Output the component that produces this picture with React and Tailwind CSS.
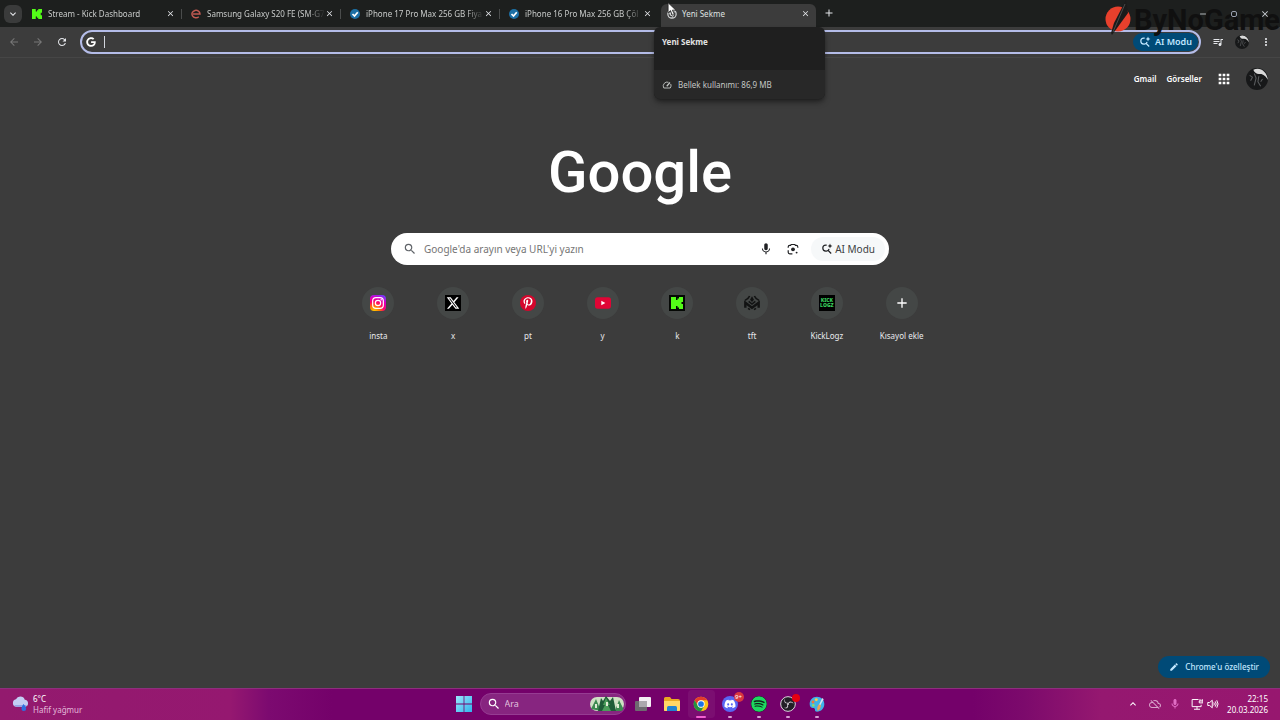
import {
  MdSearch,
  MdMic,
  MdRefresh,
  MdArrowBack,
  MdArrowForward,
  MdQueueMusic,
  MdEdit,
  MdClose,
  MdAdd,
  MdRemove,
  MdMoreVert,
  MdApps,
  MdKeyboardArrowDown,
  MdKeyboardArrowUp,
  MdOutlineMic,
  MdCloudOff,
} from 'react-icons/md'
import { FaDiscord, FaPinterestP, FaGoogle, FaSpotify } from 'react-icons/fa'
import { FaXTwitter } from 'react-icons/fa6'

function KickIcon({ className, framed }) {
  return (
    <svg viewBox="0 0 16 16" className={className} aria-hidden="true">
      {framed && <rect width="16" height="16" fill="#050805" />}
      <path
        fill="#53fc18"
        d={
          framed
            ? 'M2 2h5v3h1.500V3.500H10V2h4v5h-1.500v2H14v5h-4v-1.500H8.500V11H7v3H2z'
            : 'M0 0h6v4h2V2h2V0h6v6h-2v4h2v6h-6v-2H8v-2H6v4H0z'
        }
      />
    </svg>
  )
}

function AiSearchIcon({ className }) {
  return (
    <svg viewBox="0 0 20 20" className={className} fill="none" aria-hidden="true">
      <path
        d="M9.500 3.500H8a5 5 0 0 0 0 10h1a5 5 0 0 0 4.500-3.500M12 12.500l5 5"
        stroke="currentColor"
        strokeWidth="2"
      />
      <path
        d="M15 1l1.200 2.800L19 5l-2.800 1.200L15 9l-1.200-2.800L11 5l2.800-1.200z"
        fill="currentColor"
      />
    </svg>
  )
}

function LensIcon({ className }) {
  return (
    <svg viewBox="0 0 20 20" className={className} fill="none" aria-hidden="true">
      <path
        d="M2 8V6.500A2.500 2.500 0 0 1 4.500 4H6l1-1.500h6L14 4h1.500A2.500 2.500 0 0 1 18 6.500V8M2 12v3.500A2.500 2.500 0 0 0 4.500 18H9"
        stroke="currentColor"
        strokeWidth="2"
      />
      <circle cx="10" cy="10.500" r="3.200" fill="currentColor" />
      <circle cx="16" cy="16" r="1.600" fill="currentColor" />
    </svg>
  )
}

function ChromeIcon({ className }) {
  return (
    <svg viewBox="0 0 24 24" className={className} aria-hidden="true">
      <circle cx="12" cy="12" r="11" fill="#fbc116" />
      <path d="M2.470 6.500A11 11 0 0 1 21.530 6.500H12a5.500 5.500 0 0 0-4.760 8.250z" fill="#e33b2e" />
      <path d="M2.470 6.500A11 11 0 0 0 12 23l4.760-8.250A5.500 5.500 0 0 1 7.240 14.750z" fill="#229342" />
      <circle cx="12" cy="12" r="5.500" fill="#fff" />
      <circle cx="12" cy="12" r="4.300" fill="#1a73e8" />
    </svg>
  )
}

function GrayChromeIcon({ className }) {
  return (
    <svg viewBox="0 0 24 24" className={className} fill="none" aria-hidden="true">
      <circle cx="12" cy="12" r="10" stroke="#d0d2d3" strokeWidth="3" />
      <circle cx="12" cy="12" r="4" stroke="#d0d2d3" strokeWidth="3" />
      <path d="M12 7h9M8 14L3.500 6.500M16 14l-4.500 8" stroke="#d0d2d3" strokeWidth="2" />
    </svg>
  )
}

function EpeyIcon({ className }) {
  return (
    <svg viewBox="0 0 20 20" className={className} fill="none" aria-hidden="true">
      <path
        d="M4 10h14a8 7.500 0 1 0-2.500 5.500"
        stroke="#c25a52"
        strokeWidth="3"
      />
    </svg>
  )
}

function CheckBadge({ className }) {
  return (
    <svg viewBox="0 0 20 20" className={className} fill="none" aria-hidden="true">
      <circle cx="10" cy="10" r="10" fill="#1c6fa5" />
      <path d="M5 10l4 4 6.500-7.500" stroke="#fff" strokeWidth="3.500" />
    </svg>
  )
}

function Avatar({ className }) {
  return (
    <svg viewBox="0 0 24 24" className={className} aria-hidden="true">
      <circle cx="12" cy="12" r="12" fill="#171819" />
      <path d="M8 2c7-4 15 2 16 11-2-4-6-7-9-6.500C12 7 9 5 8 2z" fill="#d9d9d9" />
      <path d="M4 8l3 2-2 4M9 6l2 5-2 8M14 9l-1 6 3 5M18 12l-2 3" stroke="#5a5c5e" strokeWidth="1.200" fill="none" />
    </svg>
  )
}

function InstagramIcon({ className }) {
  return (
    <svg viewBox="0 0 24 24" className={className} aria-hidden="true">
      <defs>
        <radialGradient id="insta" cx="0.25" cy="1.050" r="1.150">
          <stop offset="0" stopColor="#ffd600" />
          <stop offset="0.3" stopColor="#ff7a00" />
          <stop offset="0.55" stopColor="#ff0169" />
          <stop offset="0.8" stopColor="#d300c5" />
          <stop offset="1" stopColor="#7638fa" />
        </radialGradient>
      </defs>
      <rect width="24" height="24" rx="6" fill="url(#insta)" />
      <rect x="4" y="4" width="16" height="16" rx="5" fill="none" stroke="#fff" strokeWidth="1.800" />
      <circle cx="12" cy="12" r="4" fill="none" stroke="#fff" strokeWidth="1.800" />
      <circle cx="16.800" cy="7.200" r="1.100" fill="#fff" />
    </svg>
  )
}

function YoutubeIcon({ className }) {
  return (
    <svg viewBox="0 0 24 24" className={className} aria-hidden="true">
      <rect y="3.500" width="24" height="17" rx="4" fill="#e00535" />
      <path d="M9.500 8.500v7l6-3.500z" fill="#fff" />
    </svg>
  )
}

function TftIcon({ className }) {
  return (
    <svg viewBox="0 0 24 24" className={className} fill="none" aria-hidden="true">
      <g stroke="#121313" strokeWidth="2.400">
        <path d="M8.500 1.500Q7 5 1.500 8M15.500 1.500Q17 5 22.500 8" />
        <path d="M2 19v-7.500l10 7.500 10-7.500V19" strokeWidth="3.600" />
        <path d="M7 9.500l5 4 5-4M6 20l3 2M18 20l-3 2" />
      </g>
      <path d="M12 2l3 5-3 3.500L9 7z" fill="#121313" />
    </svg>
  )
}

function WindowsIcon({ className }) {
  return (
    <svg viewBox="0 0 16 16" className={className} aria-hidden="true">
      <defs>
        <linearGradient id="win" x1="0" y1="0" x2="1" y2="1">
          <stop offset="0" stopColor="#9be7fb" />
          <stop offset="1" stopColor="#31b3ec" />
        </linearGradient>
      </defs>
      <path d="M0 0h7.600v7.600H0zM8.400 0H16v7.600H8.400zM0 8.400h7.600V16H0zM8.400 8.400H16V16H8.400z" fill="url(#win)" />
    </svg>
  )
}

function TaskViewIcon({ className }) {
  return (
    <svg viewBox="0 0 16 16" className={className} aria-hidden="true">
      <rect x="4" y="1" width="12" height="10" rx="1" fill="#f3eef3" />
      <rect x="0" y="5" width="12" height="10" rx="1" fill="#6e6a70" />
      <rect x="4" y="5" width="8" height="6" fill="#aba8ad" />
    </svg>
  )
}

function FolderIcon({ className }) {
  return (
    <svg viewBox="0 0 16 16" className={className} aria-hidden="true">
      <path d="M0 2.500Q0 1 1.500 1H6l1.500 2H14q2 0 2 2v9q0 1-1 1H1q-1 0-1-1z" fill="#e9a922" />
      <path d="M0 5h16v9q0 1-1 1H1q-1 0-1-1z" fill="#ffd766" />
      <path d="M3 15v-3.500Q3 10 4.500 10h7q1.500 0 1.500 1.500V15z" fill="#1f83d2" />
    </svg>
  )
}

function ObsIcon({ className }) {
  return (
    <svg viewBox="0 0 24 24" className={className} aria-hidden="true">
      <circle cx="12" cy="12" r="11" fill="#221f26" stroke="#ddd6de" strokeWidth="1.500" />
      <g fill="#d5cfd7">
        <path d="M8 3.500c-2 5 1 7.500 4.500 6.500C9 13 4 9 8 3.500z" />
        <path d="M20.500 12c-3.500-4-7.500-2.500-8 1 -1-5 5-7 8-1z" />
        <path d="M6 17.500c5 .5 6-3 4-6 4.500 2.500 2 9-4 6z" />
        <circle cx="12" cy="12" r="1.500" />
      </g>
    </svg>
  )
}

function PaintIcon({ className }) {
  return (
    <svg viewBox="0 0 24 24" className={className} aria-hidden="true">
      <path
        d="M12 1C5 1 1 6 1 12c0 4 2 6 5 6 2 0 3 1 3 3 0 1.500 1 2.500 3 2.500 6 0 11-5 11-11.500S18 1 12 1z"
        fill="#3fb2e8"
      />
      <circle cx="6" cy="9" r="2.200" fill="#f5733a" />
      <circle cx="11" cy="5.500" r="2.200" fill="#f7d04a" />
      <circle cx="6.500" cy="14" r="2" fill="#8fdc6b" />
      <path d="M20 3l-5 10 2 1 5-9z" fill="#d7e4ef" />
      <path d="M15 12.500l3 1.500c-.5 4-2 7-5 8.500-1.500-3-.5-7 2-10z" fill="#e8a25c" />
    </svg>
  )
}

function WeatherIcon({ className }) {
  return (
    <svg viewBox="0 0 18 16" className={className} aria-hidden="true">
      <path d="M4.500 11a4 4 0 0 1-.3-7.900A5 5 0 0 1 13.500 3.500a3.800 3.800 0 0 1 .5 7.500z" fill="#c3cdf3" />
      <path d="M2 9h14l-2 2H4.500z" fill="#93a5e6" />
      <path d="M12 8c2 2 3 3.500 3 5a2.500 2.500 0 0 1-5 0c0-1.500 1-3 2-5z" fill="#2f6fe0" />
    </svg>
  )
}

function ForestIcon({ className }) {
  return (
    <svg viewBox="0 0 34 18" className={className} aria-hidden="true">
      <rect y="2" width="34" height="14" rx="7" fill="#cfe0c4" />
      <path d="M1 14L6 4l5 12zM25 16l4-11 4.500 9-2 2z" fill="#3d8a52" />
      <path d="M8 16l3-13 2 3 3-5 4 5 3-4 3 14z" fill="#1f5c38" />
      <path d="M16 3l4 7h-2l3 6h-9l3-6h-2z" fill="#4b9d5b" />
      <path d="M6 9v4M17 7v4M28 9v4" stroke="#f2f5e4" strokeWidth="1.800" />
    </svg>
  )
}

function MonitorIcon({ className }) {
  return (
    <svg viewBox="0 0 16 16" className={className} fill="none" stroke="currentColor" strokeWidth="1.300" aria-hidden="true">
      <path d="M10 2H1.500v9.500h12V9M4 15h8M8 11.500V15M12 1.500v2.500M15 1.500v2.500M11 4h5v2.500h-5z" />
    </svg>
  )
}

function SpeakerIcon({ className }) {
  return (
    <svg viewBox="0 0 16 16" className={className} fill="none" stroke="currentColor" strokeWidth="1.300" aria-hidden="true">
      <path d="M1 6v4h2.500L7 13V3L3.500 6zM9 6q1.500 2 0 4M11 4.500q2.500 3.500 0 7M13 3q3.500 5 0 10" />
    </svg>
  )
}

const tabs = [
  { title: 'Stream - Kick Dashboard', Icon: KickIcon },
  { title: 'Samsung Galaxy S20 FE (SM-G7', Icon: EpeyIcon },
  { title: 'iPhone 17 Pro Max 256 GB Fiya', Icon: CheckBadge },
  { title: 'iPhone 16 Pro Max 256 GB Çöl', Icon: CheckBadge, last: true },
]

const shortcuts = [
  { label: 'insta', icon: <InstagramIcon className="h-4 w-4" /> },
  {
    label: 'x',
    icon: (
      <span className="flex h-4 w-4 items-center justify-center bg-black text-white">
        <FaXTwitter className="h-3.5 w-3.5" />
      </span>
    ),
  },
  {
    label: 'pt',
    icon: (
      <span className="flex h-4 w-4 items-center justify-center rounded-full bg-[#d5062c] text-white">
        <FaPinterestP className="h-3 w-3" />
      </span>
    ),
  },
  { label: 'y', icon: <YoutubeIcon className="h-4 w-4" /> },
  { label: 'k', icon: <KickIcon framed className="h-4 w-4" /> },
  { label: 'tft', icon: <TftIcon className="h-4 w-4" /> },
  {
    label: 'KickLogz',
    icon: (
      <span className="flex h-4 w-4 flex-col items-center justify-center bg-black text-[5px] leading-[5px] font-black text-[#37c95a]">
        <span>KICK</span>
        <span>LOGZ</span>
      </span>
    ),
  },
  { label: 'Kısayol ekle', icon: <MdAdd className="h-4 w-4 text-white" /> },
]

const apps = [
  { name: 'Görev görünümü', icon: <TaskViewIcon className="h-4 w-4" /> },
  { name: 'Dosya Gezgini', icon: <FolderIcon className="h-4 w-4" /> },
  { name: 'Chrome', icon: <ChromeIcon className="h-4 w-4" />, active: true },
  {
    name: 'Discord',
    icon: (
      <span className="flex h-4 w-4 items-center justify-center rounded-full bg-[#5865f2] text-white">
        <FaDiscord className="h-3 w-3" />
      </span>
    ),
    badge: '9+',
    running: true,
  },
  {
    name: 'Spotify',
    icon: <FaSpotify className="h-4 w-4 rounded-full bg-[#10251a] text-[#1ed760]" />,
    running: true,
  },
  { name: 'OBS Studio', icon: <ObsIcon className="h-4 w-4" />, recording: true, running: true },
  { name: 'Paint', icon: <PaintIcon className="h-4 w-4" />, running: true },
]

function TabStrip() {
  return (
    <div className="flex h-[27px] items-end bg-[#1d1f1e] pl-1">
      <button
        aria-label="Sekmelerde ara"
        className="mb-1 flex h-[18px] w-[18px] items-center justify-center rounded-md bg-[#3a3b3b] text-gray-200"
      >
        <MdKeyboardArrowDown className="h-3 w-3" />
      </button>

      <div className="ml-px flex">
        {tabs.map(({ title, Icon, last }) => (
          <div key={title} className="relative flex h-[27px] w-[159px] items-center pr-[7px] pl-[9px]">
            <Icon className="h-2.5 w-2.5 shrink-0" />
            <span className="ml-1.5 flex-1 mask-r-from-85% text-[8px] whitespace-nowrap text-[#c9cbca]">
              {title}
            </span>
            <button aria-label="Kapat" className="text-gray-200">
              <MdClose className="h-[9px] w-[9px]" />
            </button>
            {!last && <span className="absolute right-0 h-2.5 w-px bg-[#4a4c4c]" />}
          </div>
        ))}

        <div className="relative flex h-[27px] w-[159px] items-end px-0.5">
          <div className="flex h-[23px] flex-1 items-center rounded-t-md bg-[#3c3c3c] pr-1.5 pb-1 pl-1.5">
            <GrayChromeIcon className="h-2.5 w-2.5 shrink-0" />
            <span className="ml-[5px] flex-1 text-[8px] text-[#dfe1e0]">Yeni Sekme</span>
            <button aria-label="Kapat" className="text-gray-200">
              <MdClose className="h-[9px] w-[9px]" />
            </button>
          </div>

          <div className="absolute top-[27px] -left-[5px] z-10 w-[171px] overflow-hidden rounded-md bg-[#1f1f1f] shadow-md shadow-black/40">
            <p className="h-[43px] px-2 pt-[9px] text-[8px] leading-3 font-bold text-[#e3e3e3]">
              Yeni Sekme
            </p>
            <div className="flex h-[29px] items-center gap-1.5 bg-[#282828] px-2 text-[8px] text-[#c4c7c5]">
              <svg viewBox="0 0 20 16" className="h-2 w-2.5" fill="none" stroke="currentColor" strokeWidth="1.800" aria-hidden="true">
                <path d="M13 2.500A8 8 0 0 0 3.500 14h13A8 8 0 0 0 17.500 6" />
                <path d="M9.500 10.500L16 3" strokeWidth="2.400" />
              </svg>
              Bellek kullanımı: 86,9 MB
            </div>
          </div>
        </div>
      </div>

      <button aria-label="Yeni sekme" className="mb-2 ml-[5px] text-gray-200">
        <MdAdd className="h-3 w-3" />
      </button>

      <div className="relative z-10 ml-auto flex h-[27px] text-gray-300">
        <button aria-label="Simge durumuna küçült" className="flex w-[31px] items-center justify-center">
          <MdRemove className="h-2.5 w-2.5" />
        </button>
        <button aria-label="Önceki boyut" className="flex w-[31px] items-center justify-center">
          <span className="h-1.5 w-1.5 rounded-xs border border-gray-400" />
        </button>
        <button aria-label="Pencereyi kapat" className="flex w-[31px] items-center justify-center">
          <MdClose className="h-2.5 w-2.5" />
        </button>
      </div>
    </div>
  )
}

function Toolbar() {
  return (
    <div className="flex h-[31px] items-center border-b border-[#464646] px-2 text-gray-200">
      <button aria-label="Geri" className="flex w-3 justify-center text-[#777]">
        <MdArrowBack className="h-3 w-3" />
      </button>
      <button aria-label="İleri" className="ml-3 flex w-3 justify-center text-[#777]">
        <MdArrowForward className="h-3 w-3" />
      </button>
      <button aria-label="Yenile" className="ml-3 flex w-3 justify-center">
        <MdRefresh className="h-3 w-3" />
      </button>

      <div className="ml-3 flex h-6 flex-1 items-center rounded-full border-2 border-[#b4bce8] pr-px pl-1">
        <FaGoogle className="h-2.5 w-2.5 text-white" />
        <span className="ml-2 h-3 w-px bg-gray-300" />
        <input aria-label="Adres ve arama çubuğu" className="min-w-0 flex-1 px-1 text-[9px] outline-none" />
        <button className="flex h-[18px] items-center gap-1 rounded-full bg-[#004a77] px-1.5 text-[9px] font-semibold text-[#c2e7ff]">
          <AiSearchIcon className="h-3 w-3" />
          AI Modu
        </button>
      </div>

      <button aria-label="Medya" className="ml-[11px]">
        <MdQueueMusic className="h-3 w-3" />
      </button>
      <button aria-label="Profil" className="ml-[11px]">
        <Avatar className="h-3.5 w-3.5" />
      </button>
      <button aria-label="Menü" className="ml-[11px]">
        <MdMoreVert className="h-3 w-3" />
      </button>
    </div>
  )
}

function NewTabPage() {
  return (
    <main className="flex flex-1 flex-col items-center">
      <div className="flex h-[42px] w-full items-center justify-end pr-3 text-[8px] font-semibold text-white">
        <a href="#gmail">Gmail</a>
        <a href="#gorseller" className="ml-2.5">Görseller</a>
        <button aria-label="Google uygulamaları" className="ml-3.5">
          <MdApps className="h-4 w-4" />
        </button>
        <button aria-label="Google Hesabı" className="ml-3.5">
          <Avatar className="h-[22px] w-[22px]" />
        </button>
      </div>

      <h1 className="mt-9 text-[58px] leading-[72px] font-medium text-white [font-family:Roboto,sans-serif]">
        Google
      </h1>

      <form className="mt-[25px] flex h-8 w-[498px] items-center rounded-full bg-white pr-1 pl-3 text-[#3c4043]">
        <MdSearch className="h-3.5 w-3.5 text-[#5f6368]" />
        <input
          aria-label="Google'da ara"
          placeholder="Google'da arayın veya URL'yi yazın"
          className="ml-[7px] min-w-0 flex-1 text-[10px] outline-none placeholder:text-[#757575]"
        />
        <button type="button" aria-label="Sesli arama">
          <MdMic className="h-3.5 w-3.5 text-[#202124]" />
        </button>
        <button type="button" aria-label="Görselle arama" className="ml-3.5">
          <LensIcon className="h-3 w-3 text-[#202124]" />
        </button>
        <button
          type="button"
          className="ml-3 flex h-6 items-center gap-0.5 rounded-full bg-[#f6f8f9] px-2.5 text-[10px]"
        >
          <AiSearchIcon className="h-3 w-3 text-[#202124]" />
          AI Modu
        </button>
      </form>

      <div className="mt-[22px] grid w-[598px] grid-cols-8">
        {shortcuts.map((item) => (
          <a
            key={item.label}
            href={`#${item.label}`}
            className="flex flex-col items-center gap-[11px] text-[8px] leading-3 text-[#e8eaed]"
          >
            <span className="flex h-8 w-8 items-center justify-center rounded-full bg-[#444746]">
              {item.icon}
            </span>
            {item.label}
          </a>
        ))}
      </div>

      <button className="mt-auto mr-2.5 mb-2.5 flex h-[22px] items-center gap-1.5 self-end rounded-full bg-[#004a77] px-[11px] text-[8px] font-medium text-[#c2e7ff]">
        <MdEdit className="h-2.5 w-2.5" />
        Chrome'u özelleştir
      </button>
    </main>
  )
}

function Taskbar() {
  return (
    <footer className="grid h-8 grid-cols-[1fr_auto_1fr] items-center bg-[linear-gradient(90deg,#931a6e_0%,#951870_18%,#7c0a70_21%,#74016a_26%,#74016a_76%,#7c0a6c_80%,#951870_86%,#97176f_100%)] text-white inset-shadow-[0_1px_0_#8d2f7d]">
      <div className="flex items-center gap-1 pl-3">
        <WeatherIcon className="h-4 w-[17px]" />
        <div className="text-[8px] leading-[11px]">
          <p>6°C</p>
          <p className="text-[#e3b9da]">Hafif yağmur</p>
        </div>
      </div>

      <div className="flex items-center">
        <button aria-label="Başlat" className="flex w-[30px] justify-center">
          <WindowsIcon className="h-4 w-4" />
        </button>
        <label className="mr-[3px] ml-px flex h-[22px] w-[146px] items-center rounded-full border border-[#963c92] bg-[#872580] pr-px pl-1.5">
          <MdSearch className="h-3.5 w-3.5" />
          <input
            aria-label="Ara"
            placeholder="Ara"
            className="ml-1 min-w-0 flex-1 text-[9px] outline-none placeholder:text-[#e0c0de]"
          />
          <ForestIcon className="h-[18px] w-[34px]" />
        </label>

        {apps.map((app) => (
          <button
            key={app.name}
            aria-label={app.name}
            className={`relative mx-px flex h-7 w-[27px] items-center justify-center rounded-sm ${
              app.active ? 'bg-white/5' : ''
            }`}
          >
            {app.icon}
            {app.badge && (
              <span className="absolute top-0.5 right-0 flex h-2.5 w-2.5 items-center justify-center rounded-full bg-[#d9363e] text-[6px] leading-none">
                {app.badge}
              </span>
            )}
            {app.recording && (
              <span className="absolute top-1 right-0.5 h-2 w-2 rounded-full bg-[#e60012]" />
            )}
            {app.active && <span className="absolute bottom-0 h-0.5 w-2.5 rounded-full bg-[#f25fd0]" />}
            {app.running && <span className="absolute bottom-0 h-0.5 w-1 rounded-full bg-[#d79fd3]" />}
          </button>
        ))}
      </div>

      <div className="flex items-center justify-end pr-3">
        <button aria-label="Gizli simgeler">
          <MdKeyboardArrowUp className="h-3 w-3" />
        </button>
        <MdCloudOff className="ml-2.5 h-3 w-3 text-[#d9a5cc]" />
        <MdOutlineMic className="ml-2 h-3 w-3 text-[#e06cc4]" />
        <MonitorIcon className="ml-2.5 h-3 w-3" />
        <SpeakerIcon className="ml-1 h-3 w-3" />
        <div className="ml-2 text-right text-[8px] leading-[11px]">
          <p>22:15</p>
          <p>20.03.2026</p>
        </div>
      </div>
    </footer>
  )
}

function Watermark() {
  return (
    <div className="pointer-events-none absolute top-0 right-0 flex h-9 w-44 items-center">
      <svg viewBox="0 0 30 36" className="h-9 w-[30px] shrink-0" aria-hidden="true">
        <circle cx="14" cy="19" r="12.500" fill="#e8402c" />
        <path d="M22 0l2 13-16 22-1-2 3-10z" fill="#1b1b1b" />
        <path d="M21 4L9 32" stroke="#555" strokeWidth="0.800" />
      </svg>
      <span className="mt-1 text-[29px] leading-8 font-bold text-[#101010] [font-family:Roboto,sans-serif]">
        ByNoGame
      </span>
    </div>
  )
}

function App() {
  return (
    <div className="relative flex min-h-screen flex-col overflow-hidden bg-[#3c3c3c] [font-family:'Noto_Sans',sans-serif]">
      <TabStrip />
      <Toolbar />
      <NewTabPage />
      <Taskbar />
      <Watermark />

      <svg viewBox="0 0 12 18" className="absolute top-0.5 left-[667px] z-20 h-3.5 w-2.5" aria-hidden="true">
        <path d="M1 1v13l3-3 2.500 6 2.500-1-2.500-5.500H11z" fill="#fff" stroke="#222" />
      </svg>
    </div>
  )
}

export default App
